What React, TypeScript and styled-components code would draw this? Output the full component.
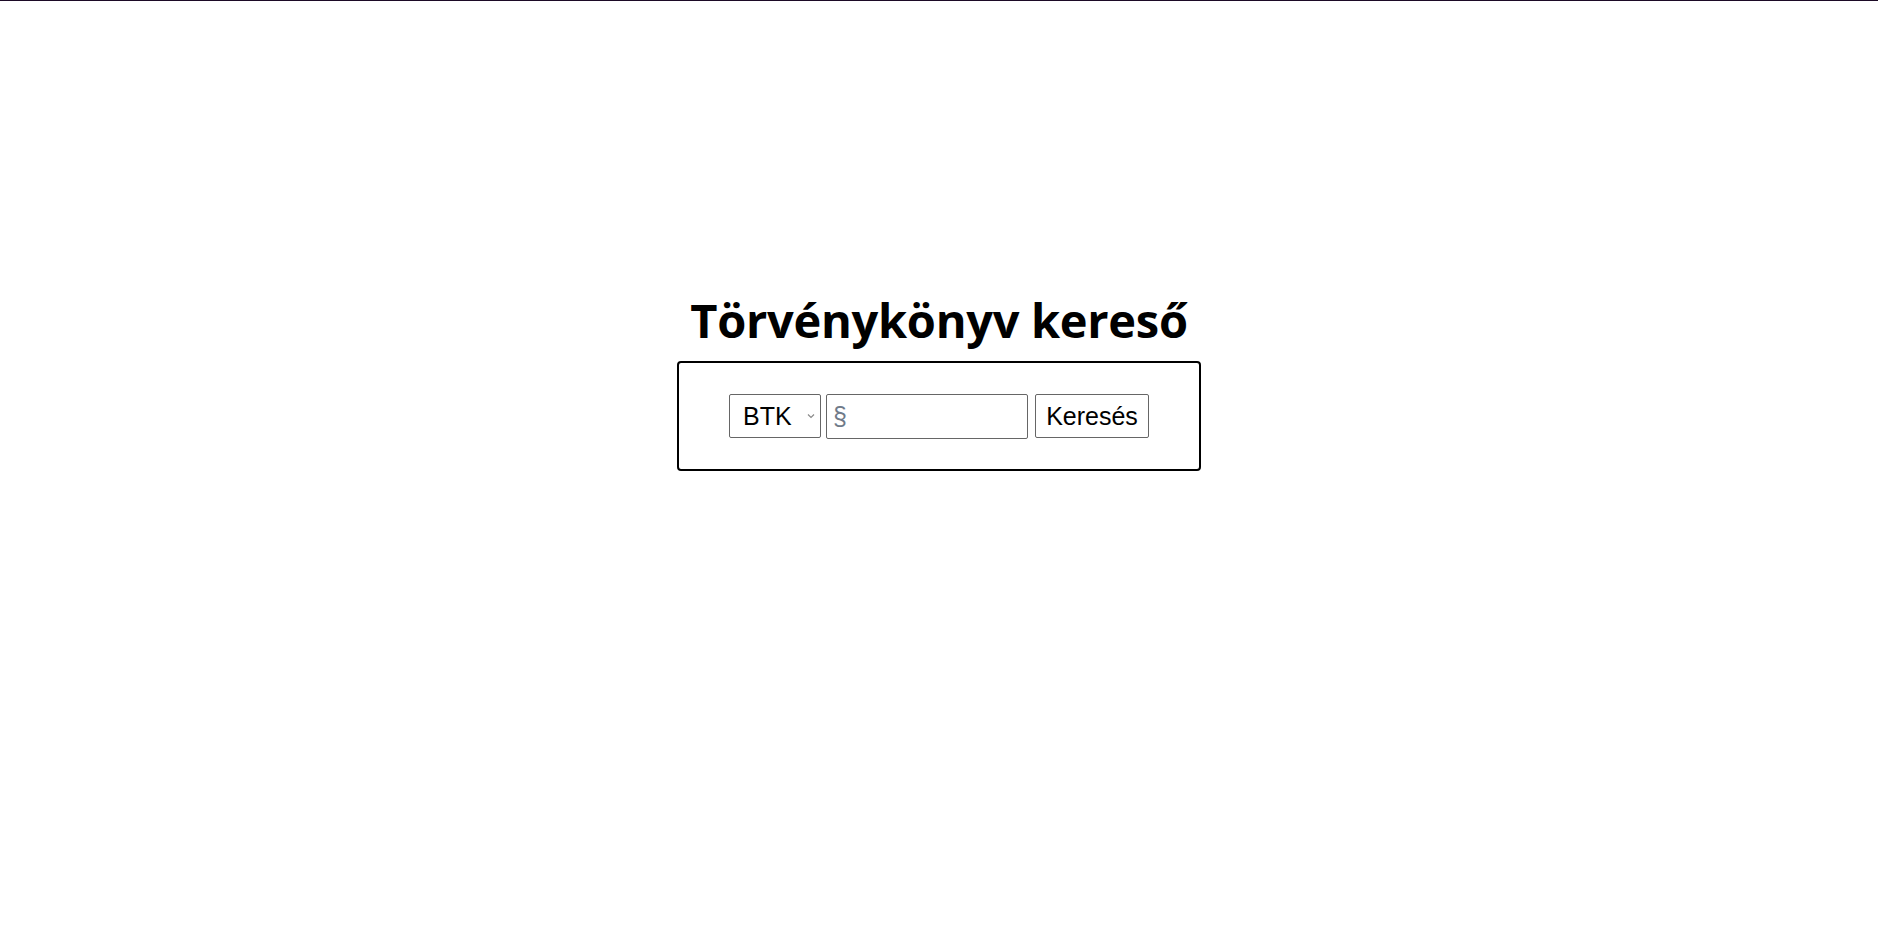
import React from "react";
import styled, { createGlobalStyle } from "styled-components";

const Global = createGlobalStyle`
  html, body { margin: 0; padding: 0; background: #ffffff; }
  body { font-family: "Open Sans", "Liberation Sans", sans-serif; color: #000; }
  * { box-sizing: border-box; }
`;

const TopLine = styled.div`
  height: 1px;
  background: #1c0a26;
`;

const Page = styled.main`
  display: flex;
  flex-direction: column;
  align-items: center;
  padding-top: 286px;
`;

const Title = styled.h1`
  margin: 0 0 8px;
  font-family: "Open Sans", "Noto Sans", sans-serif;
  font-weight: 700;
  font-size: 47px;
  line-height: 66px;
  letter-spacing: -0.3px;
`;

const Card = styled.form`
  display: flex;
  align-items: center;
  width: 524px;
  height: 110px;
  justify-content: center;
  border: 2px solid #000;
  border-radius: 4px;
  padding: 30px 50px;
`;

const SelectWrap = styled.div`
  position: relative;
  width: 92px;
  height: 44px;
`;

const Select = styled.select`
  appearance: none;
  width: 100%;
  height: 100%;
  border: 1px solid #666;
  border-radius: 2px;
  background: #fff;
  font-family: "Liberation Sans", Arial, sans-serif;
  font-size: 25px;
  color: #000;
  padding: 0 0 0 13px;
  margin: 0;
`;

const Chevron = styled.svg`
  position: absolute;
  right: 6px;
  top: 19px;
  width: 8px;
  height: 6px;
  pointer-events: none;
`;

const Input = styled.input`
  width: 202px;
  height: 45px;
  margin-left: 5px;
  border: 1px solid #666;
  border-radius: 2px;
  font-family: "Liberation Sans", Arial, sans-serif;
  font-size: 25px;
  padding: 0 6px;
  &::placeholder { color: #6f7a89; }
`;

const Button = styled.button`
  width: 114px;
  height: 44px;
  margin-left: 7px;
  border: 1px solid #666;
  border-radius: 2px;
  background: #fff;
  font-family: "Liberation Sans", Arial, sans-serif;
  font-size: 25px;
  color: #000;
  padding: 0;
`;

export default function App() {
  return (
    <>
      <Global />
      <TopLine />
      <Page>
        <Title>Törvénykönyv kereső</Title>
        <Card onSubmit={(e) => e.preventDefault()}>
          <SelectWrap>
            <Select defaultValue="BTK">
              <option value="BTK">BTK</option>
              <option value="PTK">PTK</option>
            </Select>
            <Chevron viewBox="0 0 8 6">
              <path d="M1 1.5 L4 4.5 L7 1.5" fill="none" stroke="#8a8a8a" strokeWidth="1.2" />
            </Chevron>
          </SelectWrap>
          <Input placeholder="§" />
          <Button type="submit">Keresés</Button>
        </Card>
      </Page>
    </>
  );
}
